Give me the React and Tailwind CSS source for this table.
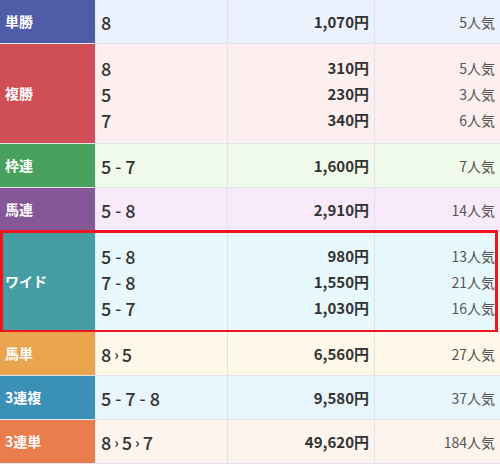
import React from "react";

const rows = [
  { label: "単勝", labelBg: "bg-[#4f5ca8]", rowBg: "bg-[#ebf2fd]", items: [{ combo: ["8"], pay: "1,070円", pop: "5人気" }] },
  {
    label: "複勝",
    labelBg: "bg-[#d04e56]",
    rowBg: "bg-[#fdeeef]",
    items: [
      { combo: ["8"], pay: "310円", pop: "5人気" },
      { combo: ["5"], pay: "230円", pop: "3人気" },
      { combo: ["7"], pay: "340円", pop: "6人気" },
    ],
  },
  { label: "枠連", labelBg: "bg-[#47a15c]", rowBg: "bg-[#f1fbec]", items: [{ combo: ["5", "-", "7"], pay: "1,600円", pop: "7人気" }] },
  { label: "馬連", labelBg: "bg-[#865796]", rowBg: "bg-[#f8eafa]", items: [{ combo: ["5", "-", "8"], pay: "2,910円", pop: "14人気" }] },
  {
    label: "ワイド",
    labelBg: "bg-[#459ca3]",
    rowBg: "bg-[#e8f9fd]",
    highlight: true,
    items: [
      { combo: ["5", "-", "8"], pay: "980円", pop: "13人気" },
      { combo: ["7", "-", "8"], pay: "1,550円", pop: "21人気" },
      { combo: ["5", "-", "7"], pay: "1,030円", pop: "16人気" },
    ],
  },
  { label: "馬単", labelBg: "bg-[#e9a44e]", rowBg: "bg-[#fef8e8]", items: [{ combo: ["8", "›", "5"], pay: "6,560円", pop: "27人気" }] },
  { label: "3連複", labelBg: "bg-[#3a90b5]", rowBg: "bg-[#e9f5fd]", items: [{ combo: ["5", "-", "7", "-", "8"], pay: "9,580円", pop: "37人気" }] },
  { label: "3連単", labelBg: "bg-[#e97d4b]", rowBg: "bg-[#fdf4ed]", items: [{ combo: ["8", "›", "5", "›", "7"], pay: "49,620円", pop: "184人気" }] },
];

function Combo({ parts }) {
  return (
    <span className="inline-flex items-center">
      {parts.map((p, i) =>
        p === "-" ? (
          <span key={i} className="mx-[4px] text-[17px]">-</span>
        ) : p === "›" ? (
          <span key={i} className="mx-[3px] text-[14px] font-bold">›</span>
        ) : (
          <span key={i}>{p}</span>
        )
      )}
    </span>
  );
}

export default function App() {
  return (
    <div
      className="w-[500px] h-[465px] overflow-hidden bg-white"
      style={{ fontFamily: '"Noto Sans CJK JP", "Noto Sans", sans-serif' }}
    >
      {rows.map((row) => {
        const multi = row.items.length > 1;
        return (
          <div
            key={row.label}
            className={`relative flex border-b border-[#e2e4eb] ${multi ? "h-[100px]" : "h-[44px]"} ${row.rowBg}`}
          >
            {/* label */}
            <div className={`w-[96px] shrink-0 flex items-center pl-[5px] border-r border-[#e8eaf0] text-white text-[14px] font-bold ${row.labelBg}`}>
              {row.label}
            </div>

            {/* combination */}
            <div className="w-[132px] shrink-0 flex flex-col justify-center pl-[5px] border-r border-[#e0e2ea] text-[18px] font-medium text-[#333] leading-[26px]">
              {row.items.map((it, i) => (
                <div key={i}>
                  <Combo parts={it.combo} />
                </div>
              ))}
            </div>

            {/* payout */}
            <div className="w-[147px] shrink-0 flex flex-col justify-center items-end pr-[5px] border-r border-[#e0e2ea] text-[15px] font-bold text-[#333] leading-[26px]">
              {row.items.map((it, i) => (
                <div key={i}>{it.pay}</div>
              ))}
            </div>

            {/* popularity */}
            <div className="flex-1 flex flex-col justify-center items-end pr-[5px] text-[14px] text-[#555] leading-[26px]">
              {row.items.map((it, i) => (
                <div key={i}>{it.pop}</div>
              ))}
            </div>

            {row.highlight && (
              <div className="absolute -top-[2px] left-0 right-[2px] h-[103px] border-[3px] border-[#f2141c] pointer-events-none" />
            )}
          </div>
        );
      })}
    </div>
  );
}
